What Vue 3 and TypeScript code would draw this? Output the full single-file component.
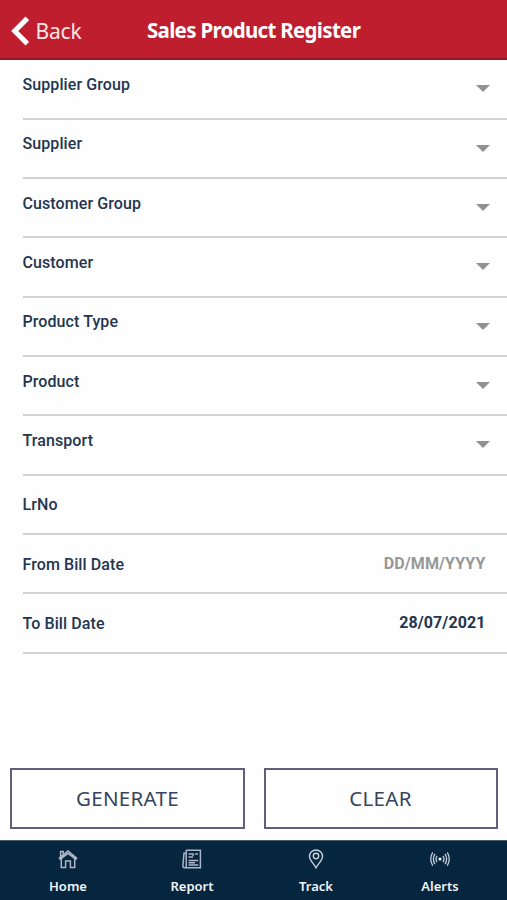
<script setup lang="ts">
import { ref } from 'vue'

interface Field {
  label: string
  kind: 'select' | 'text' | 'date'
  value?: string
}

const fields = ref<Field[]>([
  { label: 'Supplier Group', kind: 'select' },
  { label: 'Supplier', kind: 'select' },
  { label: 'Customer Group', kind: 'select' },
  { label: 'Customer', kind: 'select' },
  { label: 'Product Type', kind: 'select' },
  { label: 'Product', kind: 'select' },
  { label: 'Transport', kind: 'select' },
  { label: 'LrNo', kind: 'text' },
  { label: 'From Bill Date', kind: 'date' },
  { label: 'To Bill Date', kind: 'date', value: '28/07/2021' },
])
</script>

<template>
  <div class="screen">
    <header class="header">
      <div class="back">
        <svg class="chevron" viewBox="0 0 18 30" fill="none" stroke="#fff" stroke-width="5">
          <path d="M16.300 2.300 3.700 15l12.600 12.700" />
        </svg>
        <span class="back-text">Back</span>
      </div>
      <h1 class="title">Sales Product Register</h1>
    </header>

    <main class="form">
      <div v-for="field in fields" :key="field.label" class="row" :class="field.kind">
        <span class="label">{{ field.label }}</span>
        <svg v-if="field.kind === 'select'" class="arrow" viewBox="0 0 14 7"><path d="M0 0h14L7 7z" fill="#919191" /></svg>
        <span v-else-if="field.kind === 'date'" class="date-value" :class="{ placeholder: !field.value }">{{ field.value ?? 'DD/MM/YYYY' }}</span>
      </div>
    </main>

    <div class="actions">
      <button class="action" type="button">GENERATE</button>
      <button class="action" type="button">CLEAR</button>
    </div>

    <nav class="tabs">
      <div class="tab">
        <svg class="icon" viewBox="0 0 20 20" fill="none" stroke="#aeb6c9" stroke-width="1.5">
          <path d="M3.300 9v9.500h4.300v-6.500h4.800v6.500h4.300V9M1.400 9.200 10 2l8.600 7.200-.9 1L10 4.300 2.300 10.200zM2.600 7.700V2.600h2.600v3" />
        </svg>
        <span class="tab-text">Home</span>
      </div>
      <div class="tab">
        <svg class="icon" viewBox="0 0 20 20" fill="none" stroke="#aeb6c9" stroke-width="1.5">
          <path d="M4.200 1.200h14.200v17.600H2.200c-1.200 0-1.300-.8-1.300-2L2 4.200h2.200v12.600c0 1.200-.6 2-1.600 2M4.200 4V1.200M6.500 5h4.600v2M13 5h3M6.500 8h4.600M6.500 11.500h9.700M6.500 13.800h6.500M6.500 16h9.700" />
        </svg>
        <span class="tab-text">Report</span>
      </div>
      <div class="tab">
        <svg class="icon" viewBox="0 0 20 20" fill="none" stroke="#c6d0dc" stroke-width="1.4">
          <path d="M10 18.800C8.300 15 3.500 11.800 3.500 7.300a6.500 6.300 0 0 1 13 0C16.500 11.800 11.700 15 10 18.800z" />
          <circle cx="10" cy="7" r="2.700" />
        </svg>
        <span class="tab-text">Track</span>
      </div>
      <div class="tab">
        <svg class="icon" viewBox="0 0 20 20" fill="none" stroke="#c6d0dc" stroke-width="1.300">
          <circle cx="10" cy="10" r="1.600" fill="#fff" stroke="none" />
          <path d="M7.100 7q-2.200 3 0 6M5 4.900q-3.300 5.100 0 10.200M2.700 3.400q-3.900 6.600 0 13.200M12.900 7q2.200 3 0 6M15 4.900q3.300 5.100 0 10.200M17.300 3.400q3.900 6.600 0 13.200" />
        </svg>
        <span class="tab-text">Alerts</span>
      </div>
    </nav>
  </div>
</template>

<style>
body {
  background: #fefefe;
}
</style>

<style scoped>
.screen {
  display: flex;
  flex-direction: column;
  width: 100%;
  height: 900px;
  overflow: hidden;
  background: #fefefe;
  color: #243550;
  font-family: Roboto, sans-serif;
}
.header {
  display: grid;
  grid-template-columns: 147px 1fr;
  box-sizing: border-box;
  height: 60px;
  flex: none;
  background: #bf1e2e;
  border-bottom: 2px solid #961725;
  color: #fff;
  font-family: "Noto Sans", sans-serif;
  white-space: nowrap;
}
.back {
  display: flex;
  align-items: center;
  padding: 3px 0 0 11px;
}
.chevron {
  width: 18px;
  height: 30px;
  flex: none;
}
.back-text {
  margin-left: 6.500px;
  color: #fbe6e8;
  font-size: 21px;
  line-height: 30px;
  letter-spacing: -0.200px;
}
.title {
  margin: 0;
  padding-top: 15px;
  font-size: 20.500px;
  font-weight: 700;
  line-height: 30px;
  letter-spacing: -0.690px;
}
.form {
  flex: none;
  padding: 0.400px 0 0 22.500px;
}
.row {
  display: flex;
  justify-content: space-between;
  box-sizing: border-box;
  height: 59.333px;
  border-bottom: 2px solid #d2d2d2;
  font-size: 16px;
  line-height: 20px;
}
.label {
  padding-top: 14.700px;
  font-weight: 500;
  letter-spacing: 0.090px;
}
.text .label,
.date .label {
  padding-top: 19.700px;
}
.arrow {
  width: 14px;
  height: 7px;
  margin: 25px 17px 0 0;
}
.date-value {
  padding: 18.700px 21.500px 0 0;
  font-weight: 700;
  letter-spacing: 0.100px;
}
.placeholder {
  color: #979797;
}
.actions {
  display: grid;
  grid-template-columns: 235px 234px;
  column-gap: 18.500px;
  height: 61px;
  margin: auto 0 11px 10px;
}
.action {
  padding: 0 0 2px;
  border: 2px solid #625f7a;
  background: #fefefe;
  color: #36445f;
  font-family: "Noto Sans", sans-serif;
  font-size: 20.500px;
  font-weight: 400;
  letter-spacing: 0.300px;
}
.tabs {
  display: grid;
  grid-template-columns: repeat(4, 124px);
  justify-content: center;
  box-sizing: border-box;
  height: 60px;
  flex: none;
  background: #06263f;
  border-top: 1px solid #435a6b;
  color: #f2f4f7;
}
.tab {
  display: flex;
  flex-direction: column;
  align-items: center;
  padding: 8px 0 0 1px;
}
.icon {
  width: 20px;
  height: 20px;
}
.tab-text {
  margin-top: 8px;
  font-family: "Noto Sans", sans-serif;
  font-size: 13px;
  font-weight: 600;
  line-height: 18px;
}
</style>
